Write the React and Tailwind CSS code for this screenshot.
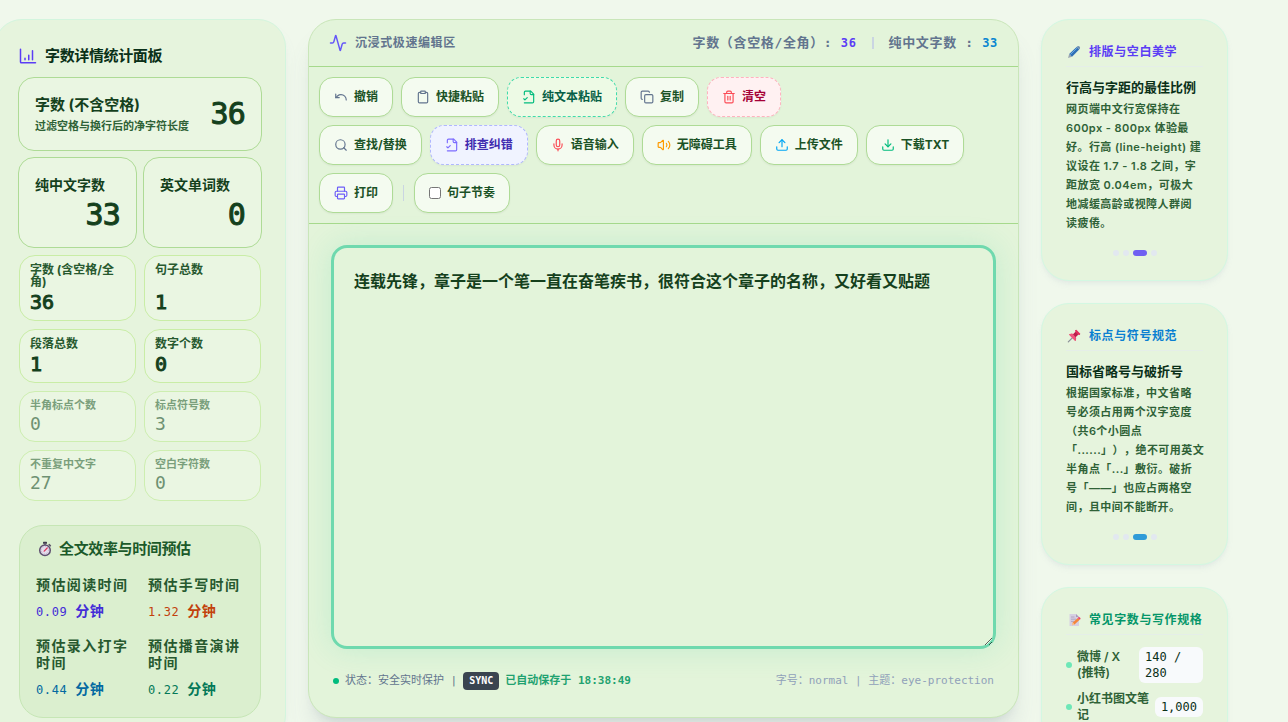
import {
  Activity,
  Clipboard,
  Copy,
  Download,
  Mic,
  Printer,
  Search,
  Trash2,
  Undo,
  Upload,
  Volume2,
} from 'lucide-react';

const secondaryStats = [
  { label: '字数 (含空格/全角)', value: 36 },
  { label: '句子总数', value: 1 },
  { label: '段落总数', value: 1 },
  { label: '数字个数', value: 0 },
];

const minorStats = [
  { label: '半角标点个数', value: 0 },
  { label: '标点符号数', value: 3 },
  { label: '不重复中文字', value: 27 },
  { label: '空白字符数', value: 0 },
];

const timeStats = [
  { label: '预估阅读时间', value: '0.09', color: 'text-indigo-700' },
  { label: '预估手写时间', value: '1.32', color: 'text-[#c2410c]' },
  { label: '预估录入打字时间', value: '0.44', color: 'text-[#0369a1]' },
  { label: '预估播音演讲时间', value: '0.22', color: 'text-[#047857]' },
];

function StopwatchIcon() {
  return (
    <svg className="h-4 w-4" viewBox="0 0 16 16" fill="none">
      <rect x="6" y="0.8" width="4" height="2" rx="0.6" fill="#3f3a4c" />
      <path d="M8 2.5v2M12.2 3.6l1.2 1.2" stroke="#5b5468" strokeWidth="1.5" strokeLinecap="round" />
      <circle cx="8" cy="9.2" r="5.3" fill="#e4dcec" stroke="#5f5070" strokeWidth="1.5" />
      <circle cx="8" cy="9.2" r="3.7" stroke="#a99ab8" strokeWidth="0.7" strokeDasharray="0.8 1.1" />
      <path d="M7.2 10.2l3-3.2" stroke="#e0355c" strokeWidth="1.2" strokeLinecap="round" />
    </svg>
  );
}

function PenIcon() {
  return (
    <svg className="h-4 w-4" viewBox="0 0 16 16">
      <path d="M2 14l1.2-4 2.8 2.8z" fill="#9aa4b0" />
      <path d="M3.2 10L10.6 3l2.6 2.6L6 12.8z" fill="#2f6fb5" />
      <path d="M10.6 3l1.3-1c.9-.5 2.7 1.1 2.1 2.2l-.8 1.4z" fill="#6d8fb3" />
      <path d="M4.3 10.6l6.6-6.4" stroke="#6fb0ea" strokeWidth="0.9" />
    </svg>
  );
}

function PinIcon() {
  return (
    <svg className="h-4 w-4" viewBox="0 0 16 16">
      <path d="M6.3 9.8L2.3 13.9" stroke="#8a8f99" strokeWidth="1.2" strokeLinecap="round" />
      <path d="M3 6.6c1.4-1 3-.9 4.2-.3L9.4 4 9 2.2 10.4 1.8l3.9 3.9-.5 1.4-1.8-.4-2.3 2.2c.7 1.3.6 2.9-.4 4.2z" fill="#e02f5e" />
      <path d="M3 6.6c1.4-1 3-.9 4.2-.3l2 2.6c.7 1.3.9 2.9.1 4.2z" fill="#f0587f" />
      <path d="M9.4 4l2.6 2.7-2.3 2.2-2.5-2.6z" fill="#b81f4c" />
    </svg>
  );
}

function MemoIcon() {
  return (
    <svg className="h-4 w-4" viewBox="0 0 16 16">
      <path d="M3.5 2h6.5l3 3v9h-9.5z" fill="#d6cfe2" />
      <path d="M10 2v3h3z" fill="#a99bbb" />
      <path d="M5 5h3.5M5 7.2h5M5 9.4h3" stroke="#a99bbb" strokeWidth="0.8" />
      <path d="M6 13.2l.8-2.6 5-4.7 1.9 1.9-5.2 4.8z" fill="#f5853a" />
      <path d="M11.8 5.9l.9-.8c.8-.3 2.1 1 1.8 1.8l-.8.9z" fill="#ec3f6b" />
      <path d="M6 13.2l.8-2.6 1.7 2z" fill="#f5cfa0" />
    </svg>
  );
}

function FileCheckIcon({ size, className }) {
  return (
    <svg width={size} height={size} className={className} viewBox="0 0 24 24" fill="none" stroke="currentColor" strokeWidth="2" strokeLinecap="round" strokeLinejoin="round">
      <path d="M4 22h14a2 2 0 0 0 2-2V7l-5-5H6a2 2 0 0 0-2 2v4" />
      <path d="M14 2v4a2 2 0 0 0 2 2h4" />
      <path d="m3 15 2 2 4-4" />
    </svg>
  );
}

function MainStat({ label, value }) {
  return (
    <div className="rounded-2xl border border-[#aedb96] bg-[#eaf6e2] p-4">
      <div className="text-[14px] leading-[21px] font-bold">{label}</div>
      <div className="mt-1 text-right font-['DejaVu_Sans_Mono',monospace] text-[30px] leading-8 tracking-tight [-webkit-text-stroke:1px]">
        {value}
      </div>
    </div>
  );
}

function StatsPanel() {
  return (
    <aside className="-ml-1.5 w-[292px] shrink-0 self-start rounded-[28px] border border-[#d3f5de] bg-[#e6f4dd] p-6 text-[#14401c] shadow-lg shadow-slate-400/10">
      <h2 className="flex items-center gap-2 text-[15px] leading-6 font-bold tracking-tight text-[#0a3018]">
        <svg className="h-[18px] w-[18px]" viewBox="0 0 24 24" fill="none" stroke="#5b3df5" strokeWidth="2" strokeLinecap="round" strokeLinejoin="round">
          <path d="M2 3v17a1 1 0 0 0 1 1h19M8 17v-2M13 17v-6M18 17V5" />
        </svg>
        字数详情统计面板
      </h2>

      <div className="-mx-px mt-[9px] grid grid-cols-2 gap-1.5">
        <div className="col-span-2 flex items-center justify-between rounded-2xl border border-[#aedb96] bg-[#eaf6e2] p-4">
          <div>
            <div className="text-[15px] leading-[21px] font-bold">字数 (不含空格)</div>
            <div className="mt-1 text-[11px] leading-[15px] font-semibold whitespace-nowrap text-[#2f6237]">
              过滤空格与换行后的净字符长度
            </div>
          </div>
          <div className="font-['DejaVu_Sans_Mono',monospace] text-[30px] leading-8 tracking-tight [-webkit-text-stroke:1px]">36</div>
        </div>
        <MainStat label="纯中文字数" value={33} />
        <MainStat label="英文单词数" value={0} />
      </div>

      <div className="mt-[7px] grid grid-cols-2 gap-2">
        {secondaryStats.map((stat) => (
          <div key={stat.label} className="flex flex-col justify-between rounded-2xl border border-[#c9eda6] bg-[#eaf6e2] px-2.5 pt-2 pb-1">
            <div className="text-[12px] leading-3 font-bold text-[#27592f]">{stat.label}</div>
            <div className="font-['DejaVu_Sans_Mono',monospace] text-[20px] leading-7 [-webkit-text-stroke:1px]">{stat.value}</div>
          </div>
        ))}
        {minorStats.map((stat) => (
          <div key={stat.label} className="rounded-2xl border border-[#cdeeb0] bg-[#eaf6e2] px-2.5 pt-2 pb-1">
            <div className="text-[11px] leading-[11px] font-semibold text-[#7a9f7c]">{stat.label}</div>
            <div className="font-['DejaVu_Sans_Mono',monospace] text-[18px] leading-[26px] text-[#6e9172]">
              {stat.value}
            </div>
          </div>
        ))}
      </div>

      <div className="mt-6 rounded-3xl border border-[#c6e6b5] bg-[#dbefcf] px-4 pt-3 pb-[17px]">
        <h3 className="flex items-center gap-1.5 pl-px text-[15px] leading-[22px] font-bold tracking-tight text-[#1b5a2a]">
          <StopwatchIcon />
          全文效率与时间预估
        </h3>
        <div className="mt-4 grid grid-cols-2 gap-x-4 gap-y-[15px]">
          {timeStats.map((stat) => (
            <div key={stat.label}>
              <div className="text-[14px] leading-[17px] font-bold tracking-widest text-[#27592f]">{stat.label}</div>
              <div className={`mt-2 font-['DejaVu_Sans_Mono','Noto_Sans_CJK_SC',monospace] text-[12px] leading-5 tracking-wider whitespace-nowrap ${stat.color}`}>
                {stat.value} <span className="text-[14px] font-bold">分钟</span>
              </div>
            </div>
          ))}
        </div>
      </div>
    </aside>
  );
}

const buttonBase =
  'flex h-10 items-center gap-1.5 rounded-[14px] border px-3.5 text-[12px] font-bold whitespace-nowrap shadow-xs';
const buttonPlain = 'border-[#aedb96] bg-[#f4fbf0] text-[#1b5226]';

function ToolButton({ icon: Icon, iconColor, children, variant = buttonPlain }) {
  return (
    <button type="button" className={`${buttonBase} ${variant}`}>
      <Icon size={14} className={iconColor} />
      {children}
    </button>
  );
}

function Toolbar() {
  return (
    <div className="flex flex-col gap-2 border-b border-[#a6d98c] p-2.5">
      <div className="flex flex-wrap gap-2">
        <ToolButton icon={Undo} iconColor="text-slate-500">撤销</ToolButton>
        <ToolButton icon={Clipboard} iconColor="text-slate-500">快捷粘贴</ToolButton>
        <ToolButton icon={FileCheckIcon} iconColor="text-emerald-500" variant="border-dashed border-[#3fdcaa] bg-[#edfae5] text-[#065f46]">
          纯文本粘贴
        </ToolButton>
        <ToolButton icon={Copy} iconColor="text-slate-500">复制</ToolButton>
        <ToolButton icon={Trash2} iconColor="text-[#fb4b55]" variant="border-dashed border-[#ffb3bf] bg-[#fff1f2] text-[#a50036]">
          清空
        </ToolButton>
      </div>
      <div className="flex flex-wrap items-center gap-2">
        <ToolButton icon={Search} iconColor="text-slate-500">查找/替换</ToolButton>
        <ToolButton icon={FileCheckIcon} iconColor="text-[#7c6cff]" variant="border-dashed border-[#b0b8ff] bg-[#f0f3ff] text-[#3f2bb0]">
          排查纠错
        </ToolButton>
        <ToolButton icon={Mic} iconColor="text-[#fb4b55]">语音输入</ToolButton>
        <ToolButton icon={Volume2} iconColor="text-amber-500">无障碍工具</ToolButton>
        <ToolButton icon={Upload} iconColor="text-sky-500">上传文件</ToolButton>
        <ToolButton icon={Download} iconColor="text-emerald-500">下载TXT</ToolButton>
        <ToolButton icon={Printer} iconColor="text-[#6d5ef8]">打印</ToolButton>
        <div className="mx-0.5 h-4 w-px bg-slate-300"></div>
        <label className={`${buttonBase} ${buttonPlain}`}>
          <input type="checkbox" className="h-3 w-3" />
          句子节奏
        </label>
      </div>
    </div>
  );
}

function Editor() {
  return (
    <main className="flex min-w-0 flex-1 flex-col rounded-[28px] border border-[#c9e6b9] bg-[#e3f4da] shadow-xl shadow-slate-500/15">
      <div className="flex h-[47px] items-center justify-between border-b border-[#a6d98c] px-5">
        <div className="flex items-center gap-2 text-[12px] font-bold tracking-wider text-slate-500">
          <Activity size={18} className="text-[#6556f8]" />
          沉浸式极速编辑区
        </div>
        <div className="flex items-center gap-[15px] font-['DejaVu_Sans_Mono','Noto_Sans_CJK_SC',monospace] text-[13px] font-bold tracking-wider text-slate-500 [text-spacing-trim:space-all]">
          <span>
            字数（含空格/全角）: <span className="text-[12px] text-[#5b3df5]">36</span>
          </span>
          <span className="h-3 w-0.5 bg-slate-300"></span>
          <span>
            纯中文字数 : <span className="text-[12px] text-[#0a86d1]">33</span>
          </span>
        </div>
      </div>

      <Toolbar />

      <div className="flex min-h-0 flex-1 flex-col px-[22px] pt-[21px] pb-[26px]">
        <textarea
          aria-label="编辑区"
          className="block w-full flex-1 rounded-2xl border-3 border-[#6fd9ae] bg-[#e3f4da] px-5 py-4 text-[16px] leading-[34px] font-bold text-[#14401c] shadow-[0_0_30px_rgba(52,211,153,0.18)] outline-none"
          defaultValue="连载先锋，章子是一个笔一直在奋笔疾书，很符合这个章子的名称，又好看又贴题"
        />
        <div className="mt-[22px] flex items-center justify-between px-0.5 font-['DejaVu_Sans_Mono','Noto_Sans_CJK_SC',monospace] text-[11px] leading-5 text-slate-500">
          <div className="flex items-center gap-1.5">
            <span className="h-1.5 w-1.5 rounded-full bg-emerald-500"></span>
            <span>状态：安全实时保护 |</span>
            <span className="rounded bg-[#3a4450] px-1.5 text-[10px] leading-[18px] font-bold text-white">SYNC</span>
            <span className="font-bold text-[#1fa270]">已自动保存于 18:38:49</span>
          </div>
          <div className="text-slate-400">字号：normal | 主题：eye-protection</div>
        </div>
      </div>
    </main>
  );
}

function GuideCard({ icon, title, color, children }) {
  return (
    <section className="rounded-[28px] border border-[#d3f8e2] bg-[#e6f4dd] p-6 shadow-md shadow-slate-400/10">
      <h2 className={`flex items-center gap-[7px] border-b border-[#e5eee8] pb-1.5 text-[12px] leading-4 font-bold tracking-wider whitespace-nowrap ${color}`}>
        {icon}
        {title}
      </h2>
      {children}
    </section>
  );
}

function Tip({ heading, children, activeDot }) {
  return (
    <>
      <h3 className="mt-2.5 text-[13px] leading-5 font-bold text-[#0a3018]">{heading}</h3>
      <p className="mt-[3px] text-[11px] leading-[19px] font-semibold tracking-[0.04em] text-[#2f6237] [text-spacing-trim:space-all]">
        {children}
      </p>
      <div className="mt-[17px] flex justify-center gap-1">
        <span className="h-1.5 w-1.5 rounded-full bg-slate-200"></span>
        <span className="h-1.5 w-1.5 rounded-full bg-slate-200"></span>
        <span className={`h-1.5 w-3.5 rounded-full ${activeDot}`}></span>
        <span className="h-1.5 w-1.5 rounded-full bg-slate-200"></span>
      </div>
    </>
  );
}

function Guides() {
  return (
    <aside className="flex w-[187px] shrink-0 flex-col gap-[22px] self-start">
      <GuideCard icon={<PenIcon />} title="排版与空白美学" color="text-[#5b3df5]">
        <Tip heading="行高与字距的最佳比例" activeDot="bg-[#7060f2]">
          网页端中文行宽保持在 600px - 800px 体验最好。行高 (line-height) 建议设在 1.7 - 1.8 之间，字距放宽
          0.04em，可极大地减缓高龄或视障人群阅读疲倦。
        </Tip>
      </GuideCard>
      <GuideCard icon={<PinIcon />} title="标点与符号规范" color="text-[#0a80d1]">
        <Tip heading="国标省略号与破折号" activeDot="bg-[#2f9bd8]">
          根据国家标准，中文省略号必须占用两个汉字宽度（共6个小圆点
          <span className="inline-block whitespace-nowrap">「......」），绝不可用英文</span>
          半角点「...」敷衍。破折号「——」也应占两格空间，且中间不能断开。
        </Tip>
      </GuideCard>
      <GuideCard icon={<MemoIcon />} title="常见字数与写作规格" color="text-[#059669]">
        <ul className="mt-3 flex flex-col gap-2 text-[12px] leading-4 font-semibold text-[#2f6237]">
          <li className="flex items-center gap-[5px]">
            <span className="h-1.5 w-1.5 shrink-0 rounded-full bg-[#6ee7b7]"></span>
            <span className="flex-1">微博 / X (推特)</span>
            <span className="w-16 shrink-0 rounded-md bg-slate-50 px-1.5 py-0.5 font-['DejaVu_Sans_Mono',monospace] font-normal text-[#0a3018]">
              140 / 280
            </span>
          </li>
          <li className="flex items-center gap-[5px]">
            <span className="h-1.5 w-1.5 shrink-0 rounded-full bg-[#6ee7b7]"></span>
            <span className="flex-1">小红书图文笔记</span>
            <span className="shrink-0 rounded-md bg-slate-50 px-1.5 py-0.5 font-['DejaVu_Sans_Mono',monospace] font-normal text-[#0a3018]">
              1,000
            </span>
          </li>
        </ul>
      </GuideCard>
    </aside>
  );
}

export default function App() {
  return (
    <div
      lang="zh-CN"
      className="flex h-screen gap-[22px] overflow-hidden bg-[#f0f8ec] pt-[19px] pr-[60px] pb-1 font-[Inter,'Noto_Sans_CJK_SC',sans-serif]"
    >
      <StatsPanel />
      <Editor />
      <Guides />
    </div>
  );
}
